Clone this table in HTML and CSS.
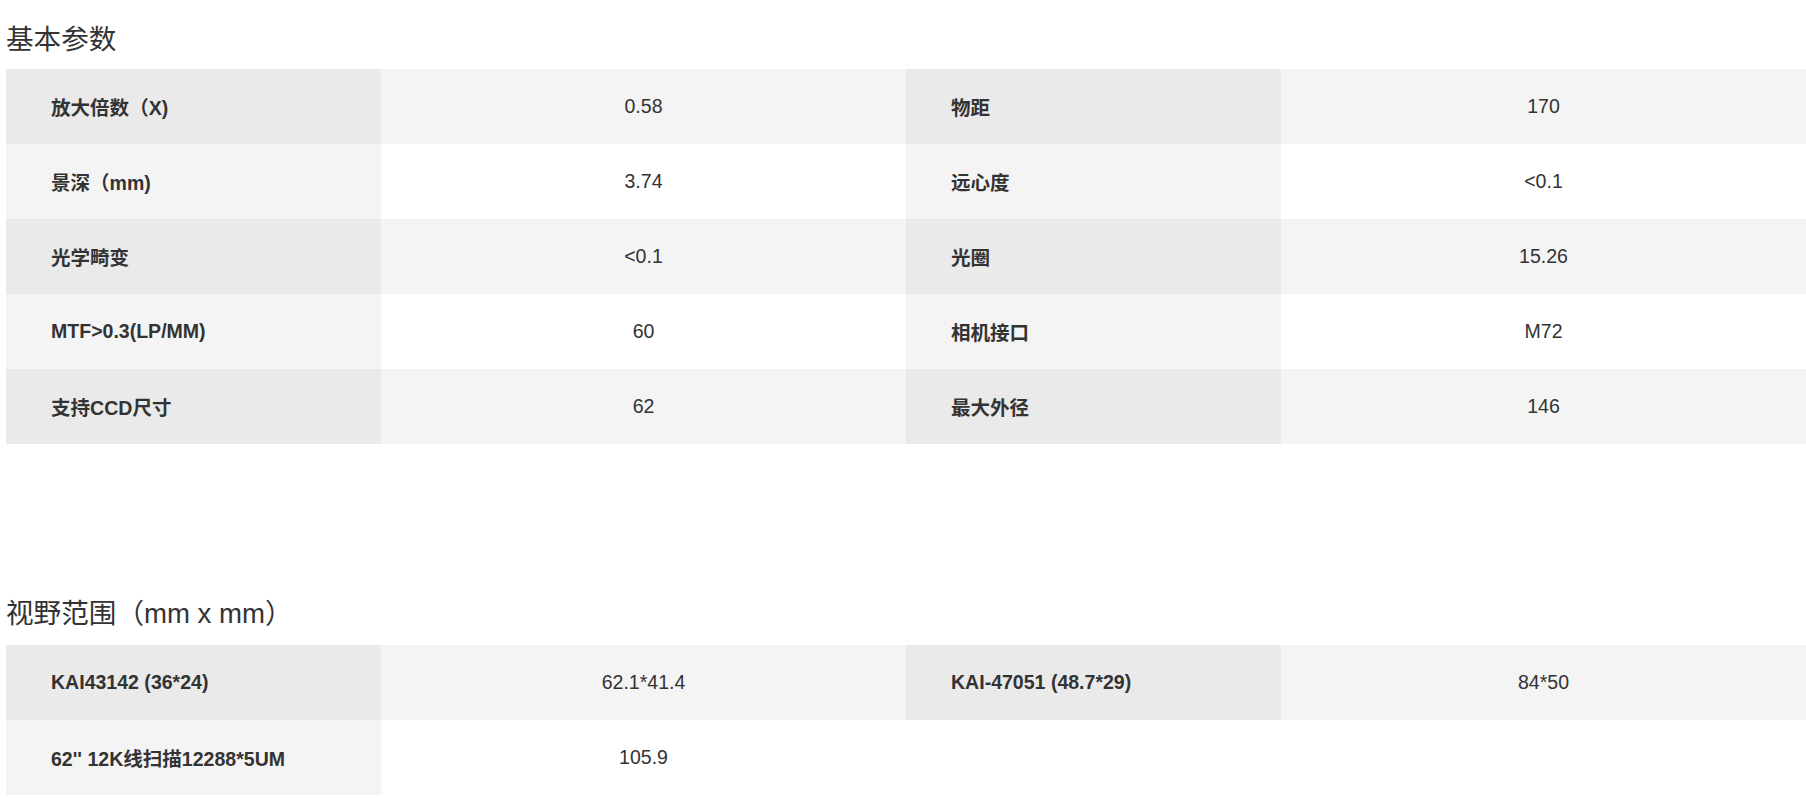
FILE: index.html
```html
<!DOCTYPE html>
<html lang="zh-CN">
<head>
<meta charset="utf-8">
<title>参数</title>
<link rel="stylesheet" href="styles.css">
</head>
<body>
<div class="page">
  <section class="block">
    <h2 class="block-title">基本参数</h2>
    <table class="spec">
      <colgroup><col class="c-label"><col class="c-value"><col class="c-label"><col class="c-value"></colgroup>
      <tbody>
        <tr><th>放大倍数（X)</th><td>0.58</td><th>物距</th><td>170</td></tr>
        <tr><th>景深（mm)</th><td>3.74</td><th>远心度</th><td>&lt;0.1</td></tr>
        <tr><th>光学畸变</th><td>&lt;0.1</td><th>光圈</th><td>15.26</td></tr>
        <tr><th>MTF&gt;0.3(LP/MM)</th><td>60</td><th>相机接口</th><td>M72</td></tr>
        <tr><th>支持CCD尺寸</th><td>62</td><th>最大外径</th><td>146</td></tr>
      </tbody>
    </table>
  </section>
  <section class="block block-second">
    <h2 class="block-title">视野范围（mm x mm）</h2>
    <table class="spec">
      <colgroup><col class="c-label"><col class="c-value"><col class="c-label"><col class="c-value"></colgroup>
      <tbody>
        <tr><th>KAI43142 (36*24)</th><td>62.1*41.4</td><th>KAI-47051 (48.7*29)</th><td>84*50</td></tr>
        <tr><th>62'' 12K线扫描12288*5UM</th><td>105.9</td><td class="empty"></td><td class="empty"></td></tr>
      </tbody>
    </table>
  </section>
</div>
</body>
</html>
```
FILE: styles.css
```css
html, body {
  margin: 0;
  padding: 0;
  background: #ffffff;
}
body {
  font-family: "Liberation Sans", Arial, "Noto Sans CJK SC", sans-serif;
  color: #333333;
  overflow: hidden;
}
.page {
  padding: 19px 0 0 6px;
  width: 1800px;
}
.block-title {
  margin: 0 0 9px 0;
  font-size: 27.6px;
  line-height: 41px;
  font-weight: normal;
  color: #333333;
}
.block-second {
  margin-top: 149px;
}
.block-second .block-title {
  margin-bottom: 11px;
}
.spec {
  width: 1800px;
  table-layout: fixed;
  border-collapse: collapse;
  border-spacing: 0;
}
.c-label { width: 375px; }
.c-value { width: 525px; }
.spec th,
.spec td {
  height: 75px;
  padding: 0;
  font-size: 19.55px;
  color: #333333;
  vertical-align: middle;
}
.spec th {
  text-align: left;
  font-weight: bold;
  padding-left: 45px;
}
.spec td {
  text-align: center;
  font-weight: normal;
}
.spec tr:nth-child(odd) th { background: #eaeaea; }
.spec tr:nth-child(odd) td { background: #f4f4f4; }
.spec tr:nth-child(even) th { background: #f4f4f4; }
.spec tr:nth-child(even) td { background: #ffffff; }
.spec tr:nth-child(even) td.empty { background: #ffffff; }
```
